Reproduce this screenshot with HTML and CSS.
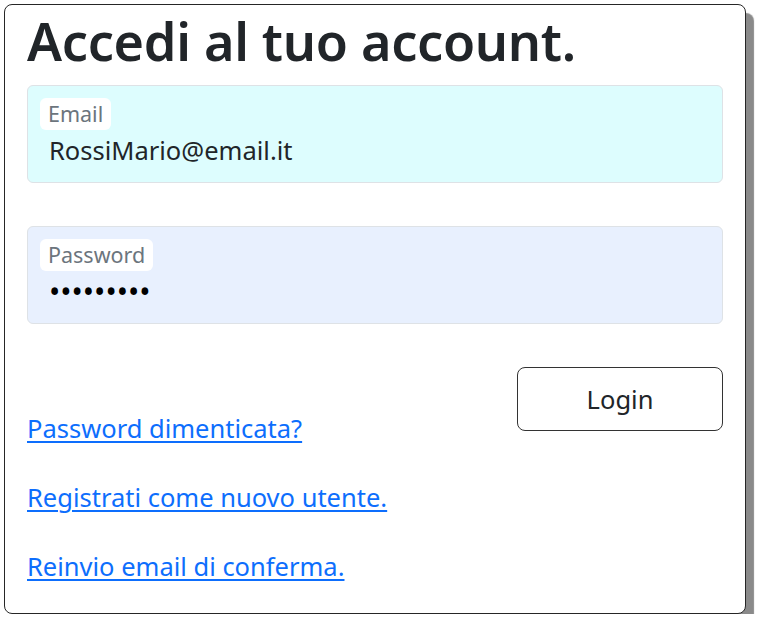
FILE: index.html
```html
<!DOCTYPE html>
<html lang="it">
<head>
<meta charset="utf-8">
<title>Accedi</title>
<link rel="stylesheet" href="styles.css">
</head>
<body>
<main class="card">
  <h1 class="title">Accedi al tuo account.</h1>
  <form class="form">
    <div class="field field-email">
      <label class="field-label" for="email">Email</label>
      <input class="field-input" id="email" type="email" value="RossiMario@email.it">
    </div>
    <div class="field field-password">
      <label class="field-label" for="pwd">Password</label>
      <input class="field-input field-dots" id="pwd" type="password" value="mario1234">
    </div>
    <div class="actions">
      <a class="link" href="#">Password dimenticata?</a>
      <button class="btn" type="button">Login</button>
    </div>
  </form>
  <a class="link link-row" href="#">Registrati come nuovo utente.</a>
  <a class="link link-row" href="#">Reinvio email di conferma.</a>
</main>
</body>
</html>
```
FILE: styles.css
```css
html, body {
  margin: 0;
  padding: 0;
  background: #ffffff;
}
body {
  font-family: "Noto Sans", "Open Sans", sans-serif;
  color: #212529;
}
.card {
  box-sizing: border-box;
  margin: 4px 0 0 4px;
  width: 742px;
  height: 610px;
  border: 1.5px solid #262626;
  border-radius: 8px;
  box-shadow: 8px 9px 1px #8a8a8a;
  padding: 0 22px;
  display: flex;
  flex-direction: column;
  background: #fff;
}
.title {
  margin: 0;
  font-size: 52.2px;
  line-height: 72px;
  font-weight: 600;
  color: #212529;
  letter-spacing: -0.3px;
}
.form {
  display: flex;
  flex-direction: column;
  margin-top: 8px;
}
.field {
  box-sizing: border-box;
  height: 98px;
  border: 1px solid #dee2e6;
  border-radius: 6px;
  padding: 12px 12px 0 12px;
  display: flex;
  flex-direction: column;
  align-items: flex-start;
  margin-bottom: 43px;
}
.field-email { background: #ddfdfe; }
.field-password { background: #e8f0fe; }
.field-label {
  background: #fff;
  border-radius: 6px;
  padding: 0 8px;
  height: 32px;
  line-height: 32px;
  font-size: 21.5px;
  color: #6c757d;
}
.field-input {
  border: 0;
  background: transparent;
  padding: 0 0 0 9px;
  margin: 3px 0 0 0;
  height: 34px;
  font-family: inherit;
  font-size: 25.5px;
  color: #212529;
  width: 100%;
  outline: none;
}
.field-dots {
  font-size: 30px;
  letter-spacing: 0;
  color: #000;
  margin-top: 3px;
}
.actions {
  display: flex;
  justify-content: space-between;
  align-items: flex-end;
}
.btn {
  width: 206px;
  height: 64px;
  border: 1px solid #333;
  border-radius: 8px;
  background: #fff;
  font-family: inherit;
  font-size: 25.5px;
  color: #212529;
  margin-bottom: 14px;
}
.link {
  font-size: 25.5px;
  color: #0d6efd;
  text-decoration: underline;
  text-decoration-thickness: 1.5px;
  text-underline-offset: 3px;
  line-height: 34px;
}
.link-row {
  align-self: flex-start;
  margin-top: 35px;
}
```
